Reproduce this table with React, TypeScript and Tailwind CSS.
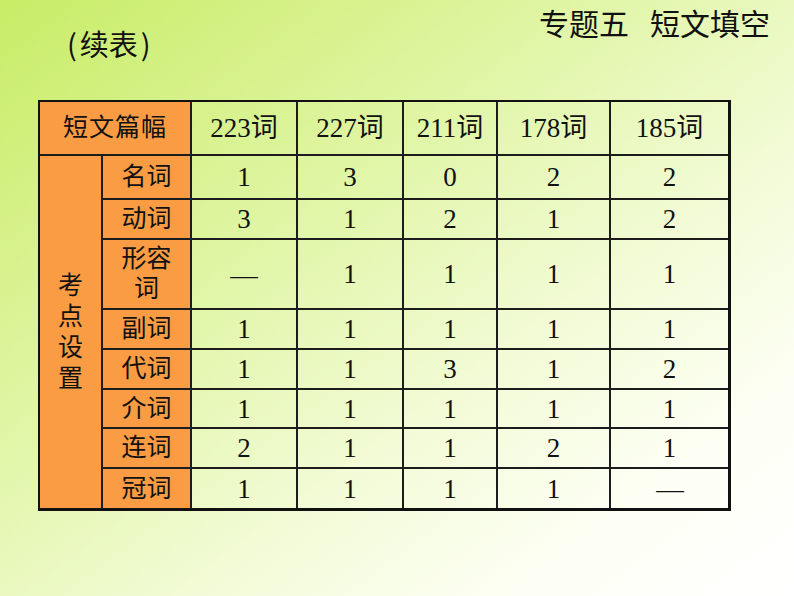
import React from "react";

const cols = ["223词", "227词", "211词", "178词", "185词"];
const rows: { label: React.ReactNode; h: number; vals: string[] }[] = [
  { label: "名词", h: 44, vals: ["1", "3", "0", "2", "2"] },
  { label: "动词", h: 40, vals: ["3", "1", "2", "1", "2"] },
  {
    label: (
      <span className="block leading-[30px]">
        形容
        <br />词
      </span>
    ),
    h: 70,
    vals: ["—", "1", "1", "1", "1"],
  },
  { label: "副词", h: 40, vals: ["1", "1", "1", "1", "1"] },
  { label: "代词", h: 40, vals: ["1", "1", "3", "1", "2"] },
  { label: "介词", h: 39, vals: ["1", "1", "1", "1", "1"] },
  { label: "连词", h: 40, vals: ["2", "1", "1", "2", "1"] },
  { label: "冠词", h: 40, vals: ["1", "1", "1", "1", "—"] },
];

const widths = [62, 89, 106, 106, 94, 113, 118];

export default function App() {
  const cell = "border-2 border-[#1c1c1c] p-0 text-center align-middle leading-[28px]";
  const orange = "bg-[#f99c43] text-[25px]";
  return (
    <div
      className="relative w-[794px] h-[596px] overflow-hidden bg-[linear-gradient(to_bottom_right,#c8ec66_0%,#dff5a2_35%,#f2fbd6_62%,#fdfff4_82%,#ffffff_100%)] text-[#111]"
      style={{ fontFamily: '"Liberation Serif", "Noto Sans CJK SC", serif' }}
    >
      <div className="flex h-[100px] items-start justify-between">
        <div
          className="pl-[67px] pt-[25px] text-[29px] leading-[36px]"
          style={{ fontFamily: '"Noto Sans CJK SC", sans-serif' }}
        >
          (<span className="px-[3px]">续表</span>)
        </div>
        <div className="pr-[24px] pt-[7px] text-[30px] leading-[36px]">
          专题五<span className="inline-block w-[21px]"></span>短文填空
        </div>
      </div>
      <div className="ml-[38px] w-max border-l-2 border-t-2 border-r-[3px] border-b-[3px] border-[#111]">
        <table className="table-fixed border-collapse border-hidden text-[27px]">
          <colgroup>
            {widths.map((w, i) => (
              <col key={i} style={{ width: w }} />
            ))}
          </colgroup>
          <tbody>
            <tr style={{ height: 53 }}>
              <td colSpan={2} className={`${cell} ${orange} tracking-[1px]`}>
                短文篇幅
              </td>
              {cols.map((c) => (
                <td key={c} className={cell}>
                  {c}
                </td>
              ))}
            </tr>
            {rows.map((r, i) => (
              <tr key={i} style={{ height: r.h }}>
                {i === 0 && (
                  <td rowSpan={rows.length} className={`${cell} ${orange} !leading-[31px]`}>
                    考<br />点<br />设<br />置
                  </td>
                )}
                <td className={`${cell} ${orange}`}>{r.label}</td>
                {r.vals.map((v, j) => (
                  <td key={j} className={cell}>
                    {v === "—" ? <span className="inline-block text-[24px] scale-x-[1.15]">—</span> : v}
                  </td>
                ))}
              </tr>
            ))}
          </tbody>
        </table>
      </div>
    </div>
  );
}
